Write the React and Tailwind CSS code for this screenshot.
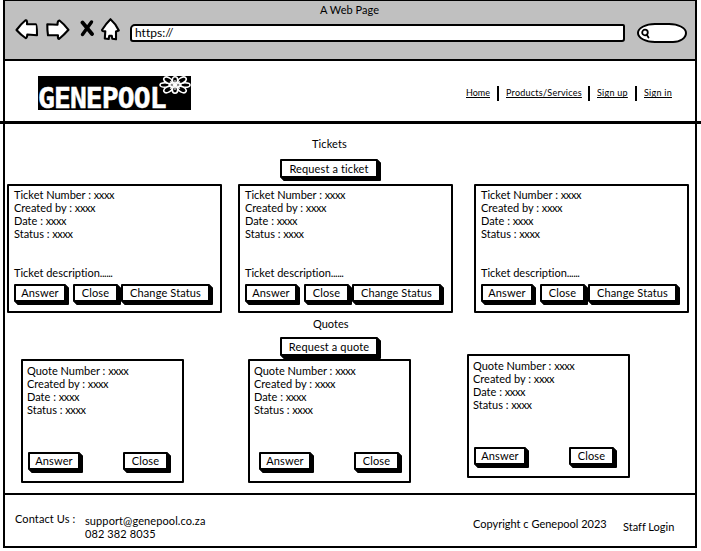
import React from "react";

function Button({ children, className = "" }) {
  return (
    <button
      className={`shrink-0 whitespace-nowrap rounded-[1px] border-2 border-black bg-white text-center tracking-[0.13px] shadow-[1px_1px_0_#000,2px_2px_0_#000,3px_3px_0_#000] ${className}`}
    >
      {children}
    </button>
  );
}

function Details({ kind }) {
  return (
    <div className="whitespace-nowrap leading-[13px]">
      <p>
        {kind} Number : <span className="tracking-[-0.4px]">xxxx</span>
      </p>
      <p>
        Created by : <span className="tracking-[-0.4px]">xxxx</span>
      </p>
      <p>
        Date : <span className="tracking-[-0.4px]">xxxx</span>
      </p>
      <p>
        Status : <span className="tracking-[-0.4px]">xxxx</span>
      </p>
    </div>
  );
}

function TicketCard() {
  return (
    <article className="h-[129px] w-[215px] shrink-0 rounded-[1px] border-2 border-black pl-[5px] pt-[2px]">
      <Details kind="Ticket" />
      <p className="mt-[26px] whitespace-nowrap leading-[13px]">
        Ticket description<span className="tracking-[-0.5px]">......</span>
      </p>
      <div className="mt-[5px] flex">
        <Button className="h-[18px] w-[52px] leading-[14px]">Answer</Button>
        <Button className="ml-[7px] h-[18px] w-[45px] leading-[14px]">Close</Button>
        <Button className="ml-[3px] h-[18px] w-[89px] leading-[14px]">Change Status</Button>
      </div>
    </article>
  );
}

function QuoteCard({ inset, className = "" }) {
  return (
    <article className={`h-[124px] w-[163px] shrink-0 rounded-[1px] border-2 border-black pt-[3px] ${className}`}>
      <div className="pl-[4px]">
        <Details kind="Quote" />
      </div>
      <div className={`mt-[36px] flex ${inset}`}>
        <Button className="h-[18px] w-[52px] leading-[14px]">Answer</Button>
        <Button className="ml-[43px] h-[18px] w-[45px] leading-[14px]">Close</Button>
      </div>
    </article>
  );
}

function BrowserBar() {
  return (
    <div className="mx-[3px] h-[61px] w-[694px] border-x-2 border-b-2 border-t border-black bg-[#c0c0c0]">
      <p className="h-[17px] pl-[315px] pt-[2px] leading-[14px] tracking-[0.05px]">A Web Page</p>
      <div className="flex h-[24px] items-start pl-[10px] text-black">
        <svg width="24" height="24" viewBox="0 0 24 24" fill="#fff" stroke="#000" strokeWidth="2.1" strokeLinejoin="round">
          <path d="M1.5 12 Q6 6 10.5 2.3 Q12.5 1.8 12 6.3 L21 6.3 Q22 6.5 22 17.3 L12.3 16.5 Q12 20.5 10.5 20 Q6 17 1.5 12 Z" />
        </svg>
        <svg className="ml-[7px]" width="24" height="24" viewBox="0 0 24 24" fill="#fff" stroke="#000" strokeWidth="2.1" strokeLinejoin="round">
          <path d="M1.3 6.2 L11.5 6.8 Q11.5 2.3 13.5 2.5 Q18 6 22.5 11.8 Q18 17 13 21 Q11.5 20.5 12 17.3 L2 17.3 Q1.2 12 1.3 6.2 Z" />
        </svg>
        <svg className="ml-[10px]" width="15" height="24" viewBox="0 0 15 24" fill="none" stroke="#000" strokeLinecap="round">
          <path d="M2.5 4.5 L12 16" strokeWidth="3.8" />
          <path d="M11.5 4 L2.5 16.5" strokeWidth="3.4" />
        </svg>
        <svg className="ml-[5px]" width="21" height="24" viewBox="0 0 21 24" fill="#fff" stroke="#000" strokeWidth="2.1" strokeLinejoin="round">
          <path d="M10.5 1.2 Q6 5.5 2 12 Q2 13.5 5.3 13.2 L4.8 20.5 L8.7 21 L9.3 17.8 L11.8 17.8 L12.3 20.8 L16 21.3 L16 13.5 L18.8 12.5 Q16 6 10.5 1.2 Z" />
        </svg>
        <div className="ml-[9px] mt-[6px] h-[18px] w-[495px] rounded-[5px_2px_3px_3px] border-2 border-black bg-white pl-[3px] text-[12px] leading-[13px]">
          https://
        </div>
        <div className="ml-[12px] mt-[5px] flex h-[20px] w-[50px] items-center rounded-[18px_18px_14px_18px/10px_10px_10px_10px] border-2 border-black bg-white pl-[1px]">
          <svg width="11" height="11" viewBox="0 0 11 11" fill="none" stroke="#000" strokeWidth="1.8" strokeLinecap="round">
            <circle cx="5" cy="4.5" r="2.8" />
            <path d="M6.8 6.8 L8.5 9.5" />
          </svg>
        </div>
      </div>
    </div>
  );
}

function Logo() {
  return (
    <div className="relative h-[34px] w-[153px] bg-black text-white">
      <span className="absolute left-0 top-[6px] w-[136px] whitespace-nowrap font-['DejaVu_Sans_Mono',monospace] text-[28px] font-bold leading-[33px] tracking-[-0.9px] [-webkit-text-stroke:0.5px_#fff]">
        GENEPOOL
      </span>
      <svg className="absolute right-0 top-0" width="32" height="19" viewBox="0 0 32 19" fill="#000" stroke="#fff" strokeWidth="1.6">
        <ellipse cx="6" cy="9" rx="5" ry="2.3" />
        <ellipse cx="26" cy="9" rx="5" ry="2.3" />
        <ellipse cx="9" cy="4.3" rx="4.5" ry="2.7" transform="rotate(28 9 4.3)" />
        <ellipse cx="23" cy="4.3" rx="4.5" ry="2.7" transform="rotate(-28 23 4.3)" />
        <ellipse cx="9" cy="13.5" rx="4.5" ry="2.7" transform="rotate(-28 9 13.5)" />
        <ellipse cx="23" cy="13.5" rx="4.5" ry="2.7" transform="rotate(28 23 13.5)" />
        <ellipse cx="16" cy="4" rx="2.7" ry="3.2" />
        <ellipse cx="16" cy="14" rx="2.7" ry="3.2" />
        <path d="M9 9 H23 M16 4 V14 M11 5.5 L21 12.5 M21 5.5 L11 12.5" strokeWidth="1.1" />
      </svg>
    </div>
  );
}

export default function App() {
  return (
    <div className="h-[551px] w-[701px] overflow-hidden bg-white font-[Lato,sans-serif] text-[11px] text-black [font-variant-ligatures:none]">
      <BrowserBar />

      <header className="mx-[3px] flex h-[60px] w-[694px] border-x-2 border-black pl-[33px] pt-[15px]">
        <Logo />
        <nav className="ml-[275px] flex h-[34px] items-center whitespace-nowrap text-[9px]">
          <a className="w-[26px] underline">Home</a>
          <span className="ml-[5px] h-[15px] w-[2px] bg-black" />
          <a className="ml-[7px] w-[77px] tracking-[0.25px] underline">Products/Services</a>
          <span className="ml-[5px] h-[15px] w-[2px] bg-black" />
          <a className="ml-[7px] w-[32px] tracking-[0.25px] underline">Sign up</a>
          <span className="ml-[6px] h-[15px] w-[2px] bg-black" />
          <a className="ml-[7px] w-[29px] tracking-[0.25px] underline">Sign in</a>
        </nav>
      </header>
      <div className="h-[3px] w-[701px] bg-black" />

      <main className="mx-[3px] h-[369px] w-[694px] border-x-2 border-black">
        <h2 className="h-[35px] pl-[307px] pt-[13px] leading-[14px] tracking-[0.1px]">Tickets</h2>
        <Button className="ml-[275px] block h-[19px] w-[98px] leading-[15px]">Request a ticket</Button>
        <div className="mt-[6px] flex pl-[2px]">
          <TicketCard />
          <div className="ml-[16px]">
            <TicketCard />
          </div>
          <div className="ml-[21px]">
            <TicketCard />
          </div>
        </div>
        <h2 className="h-[24px] pl-[308px] pt-[4px] leading-[14px]">Quotes</h2>
        <Button className="ml-[275px] block h-[19px] w-[98px] leading-[15px]">Request a quote</Button>
        <div className="flex items-start pl-[16px]">
          <QuoteCard className="mt-[3px]" inset="pl-[5px]" />
          <QuoteCard className="ml-[64px] mt-[3px]" inset="pl-[9px]" />
          <QuoteCard className="ml-[56px] -mt-[2px]" inset="pl-[5px]" />
        </div>
      </main>

      <footer className="mx-[3px] flex h-[55px] w-[694px] whitespace-nowrap border-2 border-black pl-[10px] leading-[13px]">
        <span className="mt-[17px] w-[70px] tracking-[0.1px]">Contact Us :</span>
        <address className="mt-[19px] w-[388px] not-italic tracking-[0.1px]">
          support@genepool.co.za
          <br />
          082 382 8035
        </address>
        <span className="mt-[22px] w-[150px]">Copyright c Genepool 2023</span>
        <span className="mt-[25px]">Staff Login</span>
      </footer>
    </div>
  );
}
